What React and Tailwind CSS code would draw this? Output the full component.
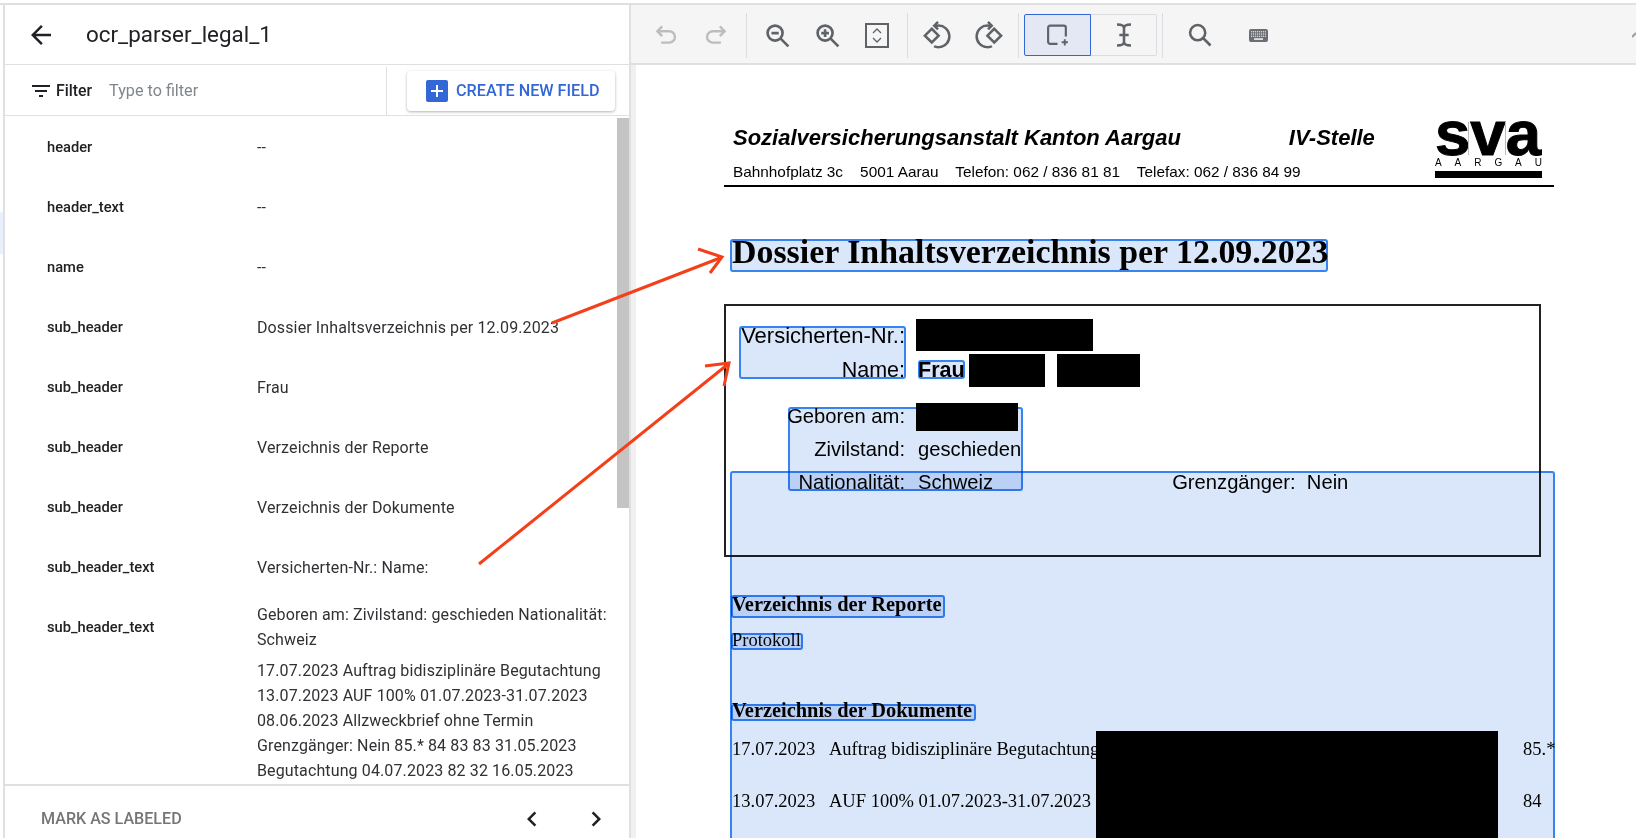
const sans = { fontFamily: 'Roboto, sans-serif' };

const fields = [
  ['header', '--'],
  ['header_text', '--'],
  ['name', '--'],
  ['sub_header', 'Dossier Inhaltsverzeichnis per 12.09.2023'],
  ['sub_header', 'Frau'],
  ['sub_header', 'Verzeichnis der Reporte'],
  ['sub_header', 'Verzeichnis der Dokumente'],
  ['sub_header_text', 'Versicherten-Nr.: Name:'],
  ['sub_header_text', 'Geboren am: Zivilstand: geschieden Nationalität: Schweiz'],
];

function Icon({ children, size = 28, color = '#5f6368', fill = 'none', sw = 2 }) {
  return (
    <svg width={size} height={size} viewBox="0 0 24 24" fill={fill} stroke={color} strokeWidth={sw}>
      {children}
    </svg>
  );
}

function ToolBtn({ children }) {
  return <div className="flex h-[42px] w-[50px] shrink-0 items-center justify-center">{children}</div>;
}

function Sep() {
  return <div className="mx-[5px] h-[45px] w-px shrink-0 bg-[#dadce0]" />;
}

function Toolbar() {
  return (
    <div className="flex h-[60px] shrink-0 items-center border-b-2 border-[#e0e0e0] bg-[#f5f5f5] pt-[2px] pl-[10px]">
      <ToolBtn>
        <Icon color="#bdbdbd" size={26} sw={2.2}><path d="M8.500 4 4 8.500 8.500 13M4 8.500h11a5.200 5.200 0 0 1 0 10.500H7.500" /></Icon>
      </ToolBtn>
      <ToolBtn>
        <Icon color="#bdbdbd" size={26} sw={2.2}><path d="M15.500 4 20 8.500 15.500 13M20 8.500H9a5.200 5.200 0 0 0 0 10.500h7.500" /></Icon>
      </ToolBtn>
      <Sep />
      <ToolBtn>
        <Icon size={29} sw={2.2}><circle cx="10" cy="10" r="6.200" /><path d="M7 10h6M14.600 14.600 21 21" /></Icon>
      </ToolBtn>
      <ToolBtn>
        <Icon size={29} sw={2.2}><circle cx="10" cy="10" r="6.200" /><path d="M6.800 10h6.400M10 6.800v6.400M14.600 14.600 21 21" /></Icon>
      </ToolBtn>
      <ToolBtn>
        <div className="flex h-[25px] w-[24px] items-center justify-center border-[2.500px] border-[#5f6368] bg-transparent">
          <svg width="12" height="17" viewBox="0 0 12 17" fill="none" stroke="#5f6368" strokeWidth="1.3">
            <path d="M2 6 6 2l4 4M2 11l4 4 4-4" />
          </svg>
        </div>
      </ToolBtn>
      <Sep />
      <ToolBtn>
        <Icon size={30} sw={2}>
          <path d="M7 7l5.500 5.500L7 18l-5.500-5.500z" />
          <path d="M12 1.500 9 4.500l3 3M9.500 4.500H12a8.600 8.600 0 0 1 1 17.200c-1.500.1-3-.1-4.200-.7" />
        </Icon>
      </ToolBtn>
      <ToolBtn>
        <Icon size={30} sw={2}>
          <path d="M17 7l-5.500 5.500L17 18l5.500-5.500z" />
          <path d="M12 1.500l3 3-3 3M14.500 4.500H12a8.600 8.600 0 0 0-1 17.200c1.500.1 3-.1 4.200-.7" />
        </Icon>
      </ToolBtn>
      <Sep />
      <div className="flex h-[42px] w-[133px] shrink-0 rounded-[2px]">
        <div className="flex w-[67px] items-center justify-center rounded-l-[2px] border border-[#3367d6] bg-[#e3e8f4]">
          <svg width="25" height="25" viewBox="0 0 24 24" fill="none" stroke="#5f6368" strokeWidth="2.1">
            <path d="M12 20H5a2 2 0 0 1-2-2V4.500a2 2 0 0 1 2-2h13a2 2 0 0 1 2 2V13" />
            <path d="M19 15.500v6M16 18.500h6" strokeWidth="1.8" />
          </svg>
        </div>
        <div className="flex w-[66px] items-center justify-center rounded-r-[2px] border border-l-0 border-[#dadce0]">
          <svg width="28" height="28" viewBox="0 0 24 24" fill="none" stroke="#5f6368" strokeWidth="2.2">
            <path d="M6 3c3 0 6 .5 6 3v12c0 2.500-3 3-6 3M18 3c-3 0-6 .5-6 3v12c0 2.500 3 3 6 3M8 12h8" />
          </svg>
        </div>
      </div>
      <Sep />
      <div className="ml-[7px] flex gap-[8px]">
        <ToolBtn>
          <Icon size={28} sw={2.2}><circle cx="10" cy="10" r="6.500" /><path d="M14.800 14.800 21 21" /></Icon>
        </ToolBtn>
        <ToolBtn>
          <svg width="19" height="13" viewBox="0 0 19 13">
            <rect width="19" height="13" rx="2" fill="#6b6f73" />
            <path d="M2 2.700h15M2 5h15M2 7.300h15" stroke="#f5f5f5" strokeWidth="1.100" strokeDasharray="1.200 .8" />
            <rect x="5" y="9.300" width="9" height="1.500" fill="#f5f5f5" />
          </svg>
        </ToolBtn>
      </div>
      <svg className="ml-auto" width="4" height="8" viewBox="0 0 4 8" fill="none" stroke="#9e9e9e" strokeWidth="2">
        <path d="M0 6 4 2" />
      </svg>
    </div>
  );
}

function FieldRow({ label, value }) {
  return (
    <div className="flex h-[60px] shrink-0 items-center">
      <div className="w-[248px] shrink-0 pl-[42px] text-[14.700px] font-medium text-[#202124]">{label}</div>
      <div className="w-[356px] shrink-0 pl-[4px] text-[16px] leading-[25px] tracking-[0.12px] text-[#303134]">{value}</div>
    </div>
  );
}

function LeftPanel() {
  return (
    <div className="relative flex h-full w-[628px] shrink-0 flex-col border-r-2 border-l-2 border-[#e0e0e0] bg-white" style={sans}>
      <div className="flex h-[60px] shrink-0 items-center border-b border-[#e0e0e0] pl-[21px]">
        <svg width="30" height="30" viewBox="0 0 24 24" fill="#202124">
          <path d="M20 11H7.830l5.590-5.590L12 4l-8 8 8 8 1.410-1.410L7.830 13H20v-2z" />
        </svg>
        <span className="ml-[30px] text-[22.400px] text-[#202124]">ocr_parser_legal_1</span>
      </div>
      <div className="flex h-[51px] shrink-0 items-center border-b border-[#e0e0e0] pt-[2px]">
        <div className="flex flex-1 items-center pl-[24px]">
          <svg width="24" height="24" viewBox="0 0 24 24" fill="#202124">
            <path d="M10 18h4v-2h-4v2zM3 6v2h18V6H3zm3 7h12v-2H6v2z" />
          </svg>
          <span className="ml-[3px] text-[15.800px] font-medium text-[#202124]">Filter</span>
          <span className="ml-[17px] text-[16.200px] text-[#80868b]">Type to filter</span>
        </div>
        <div className="flex h-full w-[243px] items-center border-l border-[#e0e0e0] pl-[20px]">
          <button className="flex h-[40px] w-[208px] items-center rounded-[4px] bg-white pl-[19px] shadow-[0_1px_3px_rgba(60,64,67,0.4)]">
            <span className="flex h-[22px] w-[22px] items-center justify-center rounded-[2px] bg-[#3367d6]">
              <svg width="14" height="14" viewBox="0 0 14 14" stroke="#fff" strokeWidth="2"><path d="M7 1v12M1 7h12" /></svg>
            </span>
            <span className="ml-[8px] text-[16.200px] font-medium whitespace-nowrap text-[#3367d6]">CREATE NEW FIELD</span>
          </button>
        </div>
      </div>
      <div className="relative flex-1 overflow-hidden pt-[1px]">
        {fields.map((f, i) => <FieldRow key={i} label={f[0]} value={f[1]} />)}
        <div className="mt-[1px] ml-[252px] w-[356px] text-[16px] leading-[25px] tracking-[0.12px] text-[#303134]">
          <p className="whitespace-nowrap">17.07.2023 Auftrag bidisziplinäre Begutachtung</p>
          <p className="whitespace-nowrap">13.07.2023 AUF 100% 01.07.2023-31.07.2023</p>
          <p className="whitespace-nowrap">08.06.2023 Allzweckbrief ohne Termin</p>
          <p className="whitespace-nowrap">Grenzgänger: Nein 85.* 84 83 83 31.05.2023</p>
          <p className="whitespace-nowrap">Begutachtung 04.07.2023 82 32 16.05.2023</p>
        </div>
        <div className="absolute top-[2px] right-0 h-[390px] w-[12px] bg-[#c4c4c4]" />
      </div>
      <div className="flex h-[54px] shrink-0 items-center border-t-2 border-[#e0e0e0] pt-[14px] pr-[18px] pl-[36px]">
        <span className="flex-1 text-[16.100px] font-medium text-[#757575]">MARK AS LABELED</span>
        <svg width="30" height="30" viewBox="0 0 24 24" fill="#202124"><path d="M15.410 7.410 14 6l-6 6 6 6 1.410-1.410L10.830 12z" /></svg>
        <svg className="ml-[34px]" width="30" height="30" viewBox="0 0 24 24" fill="#202124"><path d="M10 6 8.590 7.410 13.170 12l-4.580 4.590L10 18l6-6z" /></svg>
      </div>
    </div>
  );
}

function InfoRow({ label, h = 'h-[35px]', size = '', children }) {
  return (
    <div className={`flex items-center ${h}`}>
      <div className={`w-[188px] shrink-0 pr-[9px] text-right whitespace-nowrap ${size}`}>{label}</div>
      <div className="flex items-center pl-[4px]">{children}</div>
    </div>
  );
}

function Box({ className }) {
  return <div className={`absolute rounded-[3px] border-2 border-[#3584f0] bg-[#dae7fa] mix-blend-multiply ${className}`} />;
}

function DocRow({ date, text, no, mt }) {
  return (
    <div className={`flex h-[26px] items-center text-[18.500px] ${mt}`}>
      <span className="w-[97px] shrink-0">{date}</span>
      <span className="w-[694px] shrink-0 whitespace-nowrap">{text}</span>
      <span>{no}</span>
    </div>
  );
}

function Logo() {
  return (
    <div className="relative mr-[12px] flex w-[107px] flex-col">
      <div className="h-[43px] text-[63.500px] leading-[36px] font-bold [-webkit-text-stroke:1px_black]">sva</div>
      <div className="absolute top-[7px] left-[33px] h-[33px] w-px bg-[#bbb]" />
      <div className="absolute top-[7px] left-[70px] h-[33px] w-px bg-[#bbb]" />
      <div className="flex h-[10px] justify-between text-[10px] leading-[10px]">
        {'AARGAU'.split('').map((c, i) => <span key={i}>{c}</span>)}
      </div>
      <div className="mt-[3px] h-[7px] bg-black" />
    </div>
  );
}

function Document() {
  return (
    <div className="flex min-h-0 min-w-0 flex-1">
      <div className="w-[5px] shrink-0 bg-[#f0f0f0]" />
      <div className="relative min-w-0 flex-1 overflow-hidden bg-white">
        <div className="ml-[88px] w-[830px] pt-[50px] text-black">
          <div className="flex h-[72px] border-b-2 border-black pl-[9px]" style={{ fontFamily: '"Liberation Sans", sans-serif' }}>
            <div className="flex-1">
              <div className="flex h-[45px] items-center text-[22px] font-bold italic">
                <span>Sozialversicherungsanstalt Kanton Aargau</span>
                <span className="ml-[108px]">IV-Stelle</span>
              </div>
              <div className="text-[15.350px] whitespace-pre">Bahnhofplatz 3c    5001 Aarau    Telefon: 062 / 836 81 81    Telefax: 062 / 836 84 99</div>
            </div>
            <Logo />
          </div>

          <div className="mt-[48px] h-[35px] pl-[8px] text-[33.900px] leading-[33px] font-bold whitespace-nowrap" style={{ fontFamily: '"Liberation Serif", serif' }}>
            Dossier Inhaltsverzeichnis per 12.09.2023
          </div>

          <div className="mt-[34px] h-[253px] w-[817px] border-2 border-[#222] pt-[12px] text-[20.200px]" style={{ fontFamily: '"Liberation Sans", sans-serif' }}>
            <InfoRow label="Versicherten-Nr.:" size="text-[22px]">
              <div className="-mt-[2px] -ml-[2px] h-[32px] w-[177px] bg-black" />
            </InfoRow>
            <InfoRow label="Name:" size="text-[21.500px]">
              <span className="text-[21.500px] font-bold">Frau</span>
              <div className="ml-[4px] h-[33px] w-[76px] bg-black" />
              <div className="ml-[12px] h-[33px] w-[83px] bg-black" />
            </InfoRow>
            <div className="mt-[12px]">
              <InfoRow label="Geboren am:" h="h-[33px]">
                <div className="-ml-[2px] h-[28px] w-[102px] bg-black" />
              </InfoRow>
              <InfoRow label="Zivilstand:" h="h-[33px]">geschieden</InfoRow>
              <InfoRow label="Nationalität:" h="h-[33px]">
                <span>Schweiz</span>
                <span className="ml-[179px] whitespace-pre">Grenzgänger:  Nein</span>
              </InfoRow>
            </div>
          </div>

          <div className="pl-[8px]" style={{ fontFamily: '"Liberation Serif", serif' }}>
            <div className="mt-[34px] h-[26px] text-[20.400px] leading-[26px] font-bold">Verzeichnis der Reporte</div>
            <div className="mt-[10px] h-[26px] text-[18.500px] leading-[26px]">Protokoll</div>
            <div className="mt-[44px] h-[26px] text-[20.400px] leading-[26px] font-bold">Verzeichnis der Dokumente</div>
            <DocRow date="17.07.2023" text="Auftrag bidisziplinäre Begutachtung" no="85.*" mt="mt-[14px]" />
            <DocRow date="13.07.2023" text="AUF 100% 01.07.2023-31.07.2023" no="84" mt="mt-[26px]" />
          </div>
        </div>

        <div className="absolute top-[666px] left-[460px] h-[120px] w-[402px] bg-black" />

        {/* detected field boxes */}
        <Box className="top-[174px] left-[94px] h-[33px] w-[598px]" />
        <Box className="top-[261px] left-[103px] h-[53px] w-[167px]" />
        <Box className="top-[295px] left-[282px] h-[19px] w-[47px]" />
        <Box className="top-[342px] left-[152px] h-[84px] w-[235px]" />
        <Box className="top-[406px] left-[94px] h-[500px] w-[825px]" />
        <Box className="top-[530px] left-[95px] h-[23px] w-[214px]" />
        <Box className="top-[568px] left-[95px] h-[17px] w-[72px]" />
        <Box className="top-[639px] left-[95px] h-[17px] w-[245px]" />
      </div>
    </div>
  );
}

function Arrows() {
  return (
    <svg className="pointer-events-none absolute top-0 left-0" width="1636" height="838" fill="none" stroke="#f4401a" strokeWidth="3">
      <path d="M552 323 720 258" />
      <path d="M698 249 722 257 710 273" />
      <path d="M479 564 727 365" />
      <path d="M705 366 729 363 724 386" />
    </svg>
  );
}

export default function App() {
  return (
    <div className="relative h-[838px] w-full overflow-hidden bg-white pt-[3px]">
      <div className="flex h-[835px] border-t-2 border-[#e0e0e0]">
        <div className="w-[3px] shrink-0 pt-[207px]">
          <div className="h-[42px] bg-[#e8f0fe]" />
        </div>
        <LeftPanel />
        <div className="flex min-w-0 flex-1 flex-col">
          <Toolbar />
          <Document />
        </div>
      </div>
      <Arrows />
    </div>
  );
}
